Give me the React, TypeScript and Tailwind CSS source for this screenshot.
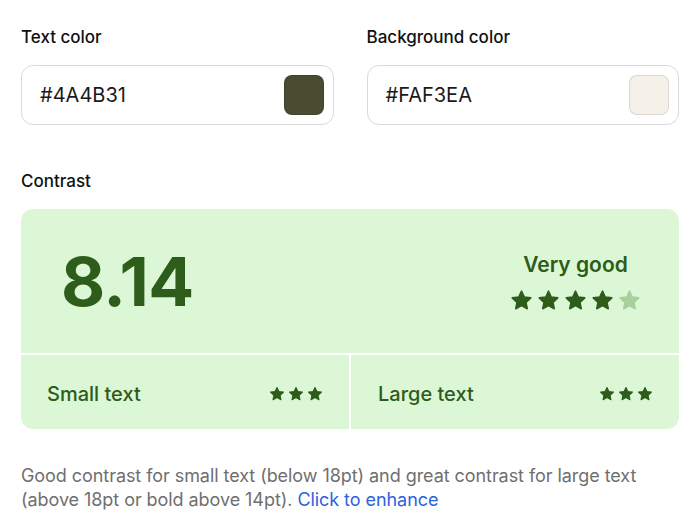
import React from 'react'

const font = { fontFamily: 'Inter, "Noto Sans", sans-serif' }

function Star({ size, faded = false }: { size: number; faded?: boolean }) {
  return (
    <svg width={size} height={size} viewBox="0 0 24 24" className={faded ? 'text-[#a8cf9c]' : 'text-[#2d5c1b]'}>
      <path
        d="M12 2.2l2.9 6.2 6.8.8-5 4.7 1.3 6.7L12 17.3l-6 3.3 1.3-6.7-5-4.7 6.8-.8z"
        fill="currentColor"
        stroke="currentColor"
        strokeWidth="1.6"
        strokeLinejoin="round"
      />
    </svg>
  )
}

function ColorField({ label, value, swatch }: { label: string; value: string; swatch: string }) {
  return (
    <div className="flex flex-col">
      <p className="text-[17px] font-medium leading-5 text-[#111]">{label}</p>
      <div className="mt-[18px] flex h-[60px] items-center justify-between rounded-[12px] border border-[#d9d9d9] bg-white pl-[18px] pr-[9px]">
        <span className="text-[20px] leading-6 text-[#1a1a1a]">{value}</span>
        <div className={`h-10 w-10 rounded-[8px] border border-black/10 ${swatch}`} />
      </div>
    </div>
  )
}

export default function App() {
  return (
    <div className="min-h-[530px] w-[700px] bg-white px-[21px] pt-[27px]" style={font}>
      <div className="grid grid-cols-2 gap-[33px]">
        <ColorField label="Text color" value="#4A4B31" swatch="bg-[#4a4b31]" />
        <ColorField label="Background color" value="#FAF3EA" swatch="bg-[#f5f0e8]" />
      </div>

      <p className="mt-[46px] text-[17px] font-medium leading-5 text-[#111]">Contrast</p>

      <div className="mt-[18px] overflow-hidden rounded-[12px] bg-white">
        <div className="flex h-[144px] items-center justify-between bg-[#dcf7d5] pl-[40px] pr-[38px]">
          <span className="text-[68px] font-bold leading-none tracking-[-0.5px] text-[#2d5c1b]">8.14</span>
          <div className="flex flex-col items-center pt-[2px]">
            <span className="text-[21px] font-semibold leading-6 text-[#2d5c1b]">Very good</span>
            <div className="mt-[12px] flex gap-[4px]">
              <Star size={23} />
              <Star size={23} />
              <Star size={23} />
              <Star size={23} />
              <Star size={23} faded />
            </div>
          </div>
        </div>
        <div className="mt-[2px] grid h-[74px] grid-cols-2 gap-[2px]">
          <div className="flex items-center justify-between bg-[#dcf7d5] pl-[26px] pr-[5px] pt-[3px]">
            <span className="text-[20px] font-medium text-[#2d5c1b]">Small text</span>
            <div className="flex gap-[3px] pr-[21px]">
              <Star size={16} />
              <Star size={16} />
              <Star size={16} />
            </div>
          </div>
          <div className="flex items-center justify-between bg-[#dcf7d5] pl-[27px] pr-[5px] pt-[3px]">
            <span className="text-[20px] font-medium text-[#2d5c1b]">Large text</span>
            <div className="flex gap-[3px] pr-[21px]">
              <Star size={16} />
              <Star size={16} />
              <Star size={16} />
            </div>
          </div>
        </div>
      </div>

      <p className="mt-[35px] text-[18px] leading-6 tracking-[-0.06px] text-[#6f6f6f]">
        Good contrast for small text (below 18pt) and great contrast for large text (above 18pt or bold above 14pt).{' '}
        <span className="text-[#2d62e0]">Click to enhance</span>
      </p>
    </div>
  )
}
